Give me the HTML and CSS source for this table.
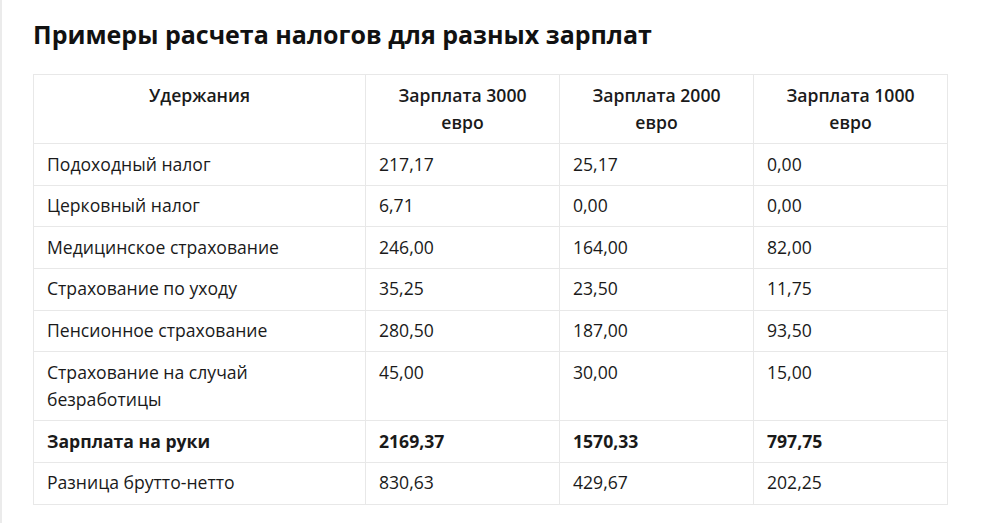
FILE: index.html
```html
<!DOCTYPE html>
<html lang="ru">
<head>
<meta charset="utf-8">
<link rel="stylesheet" href="styles.css">
</head>
<body>
<div class="page">
  <h2 class="title">Примеры расчета налогов для разных зарплат</h2>
  <table class="tax">
    <colgroup>
      <col class="c-first">
      <col class="c-val">
      <col class="c-val">
      <col class="c-val">
    </colgroup>
    <thead>
      <tr>
        <th>Удержания</th>
        <th>Зарплата 3000 евро</th>
        <th>Зарплата 2000 евро</th>
        <th>Зарплата 1000 евро</th>
      </tr>
    </thead>
    <tbody>
      <tr><td>Подоходный налог</td><td>217,17</td><td>25,17</td><td>0,00</td></tr>
      <tr><td>Церковный налог</td><td>6,71</td><td>0,00</td><td>0,00</td></tr>
      <tr><td>Медицинское страхование</td><td>246,00</td><td>164,00</td><td>82,00</td></tr>
      <tr><td>Страхование по уходу</td><td>35,25</td><td>23,50</td><td>11,75</td></tr>
      <tr><td>Пенсионное страхование</td><td>280,50</td><td>187,00</td><td>93,50</td></tr>
      <tr><td>Страхование на случай<br>безработицы</td><td>45,00</td><td>30,00</td><td>15,00</td></tr>
      <tr class="bold"><td>Зарплата на руки</td><td>2169,37</td><td>1570,33</td><td>797,75</td></tr>
      <tr><td>Разница брутто-нетто</td><td>830,63</td><td>429,67</td><td>202,25</td></tr>
    </tbody>
  </table>
</div>
</body>
</html>
```

FILE: styles.css
```css
html, body {
  margin: 0;
  padding: 0;
  background: #ffffff;
}
body {
  font-family: "Open Sans", "Liberation Sans", sans-serif;
  color: #111;
  border-left: 2px solid #ebebeb;
  min-height: 523px;
  box-sizing: border-box;
}
.page {
  padding: 18px 0 0 31px;
}
.title {
  margin: 0 0 24px 0;
  font-size: 25px;
  line-height: 32px;
  font-weight: 700;
  color: #111;
}
.tax {
  border-collapse: collapse;
  table-layout: fixed;
  width: 915px;
  font-size: 17.6px;
  line-height: 27.6px;
}
.c-first { width: 332px; }
.c-val { width: 194px; }
.tax th, .tax td {
  border: 1px solid #e8e8e8;
  padding: 6.5px 13px;
  vertical-align: top;
  text-align: left;
  color: #1a1a1a;
}
.tax th {
  font-weight: 600;
  text-align: center;
  padding-left: 30px;
  padding-right: 30px;
}
.tax tr.bold td {
  font-weight: 700;
}
```
